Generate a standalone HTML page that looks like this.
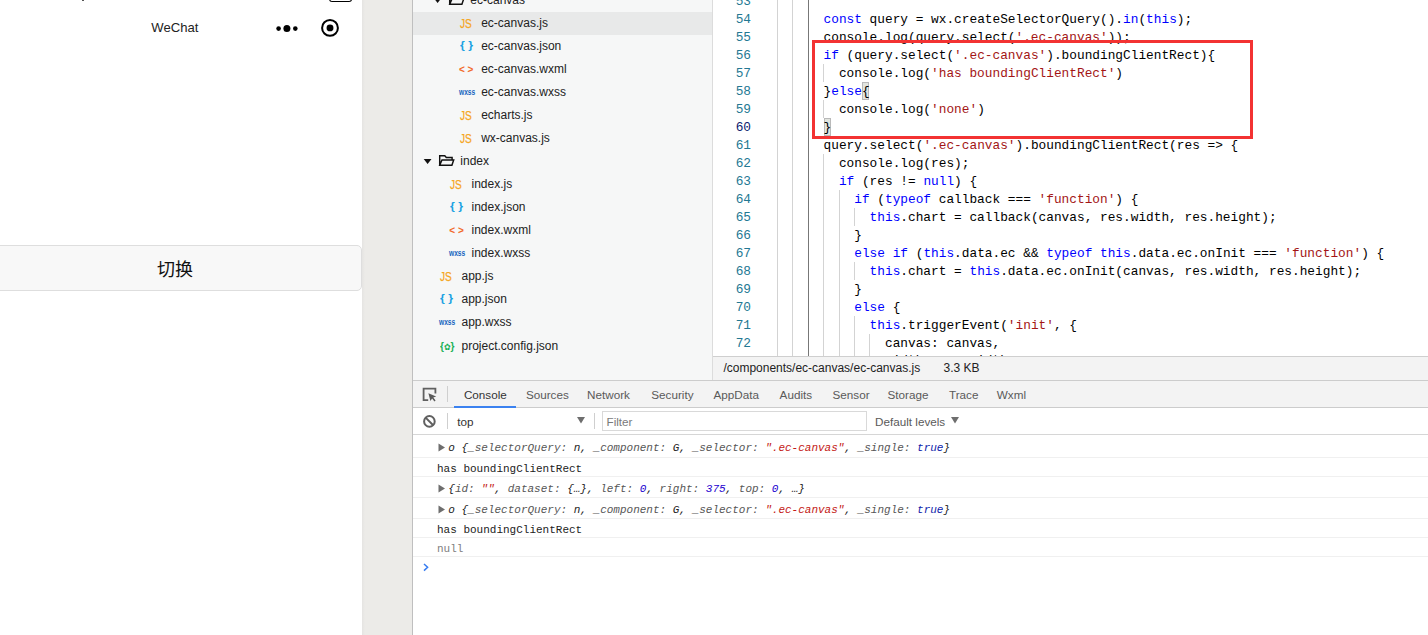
<!DOCTYPE html>
<html lang="zh">
<head>
<meta charset="utf-8">
<title>WeChat DevTools</title>
<style>
*{box-sizing:border-box;margin:0;padding:0}
html,body{width:1428px;height:635px;overflow:hidden;background:#fff}
body{position:relative;font-family:"Liberation Sans","Noto Sans CJK SC",sans-serif;color:#222}
.abs{position:absolute}
#sim{left:0;top:0;width:362px;height:635px;background:#fff;overflow:hidden}
#gap{left:362px;top:0;width:50px;height:635px;background:linear-gradient(90deg,#e5e4e2 0,#ecebe8 3px,#ecebe8 100%)}
#gapline{left:412px;top:0;width:1px;height:635px;background:#bfbfbf}
#navtitle{left:151.3px;top:20px;font-size:13.1px;line-height:16px;color:#222;white-space:nowrap}
#btn{left:-10px;top:245px;width:372px;height:46px;border:1px solid #dedede;border-radius:5px;background:#f8f8f8;font-size:18px;line-height:44px;color:#111}
#btn span{position:absolute;left:166px;top:1.5px}
#tree{left:413px;top:0;width:299px;height:380px;background:#f6f7f7;overflow:hidden}
#treeline{left:712px;top:0;width:1px;height:380px;background:#dcdcdc}
.row{position:absolute;left:0;width:299px;height:23px;font-size:12px;line-height:23px;color:#222;white-space:nowrap}
.row.sel{background:#e8e9e9}
.row .t{position:absolute;top:0}
.row svg{position:absolute}
.ic{position:absolute;top:0;height:23px;line-height:23px;white-space:pre;transform-origin:0 50%}
.js{color:#f5a623;font-size:13.3px;top:0.4px;-webkit-text-stroke:0.25px #f5a623}
.jn{color:#1ba1e2;font-size:11.5px;font-weight:bold;margin-top:-1px}
.xm{color:#f26a2a;font-size:10px;font-weight:bold}
.ws{color:#1565c0;font-size:9.5px;font-weight:bold;margin-top:-1px}
.pj{color:#1bb157;font-size:11.5px;font-weight:bold}
.gr{font-family:"DejaVu Sans",sans-serif;font-size:9px;position:relative;top:-0.5px}
#ed{left:713px;top:0;width:715px;height:356px;background:#fff;overflow:hidden}
.ln{position:absolute;left:0;width:38px;padding-top:1px;text-align:right;color:#237893;font-family:"Liberation Mono",monospace;font-size:12.81px;line-height:18px;height:20px}
.ln.cur{color:#0b216f}
.cl{position:absolute;left:49.1px;padding-top:1px;white-space:pre;color:#000;font-family:"Liberation Mono",monospace;font-size:12.81px;line-height:18px;height:20px}
.k{color:#0000ff}.s{color:#a31515}
.bm{border:1px solid #b9b9b9;background:#e2e5df}
.g{position:absolute;width:1px;background:#d3d3d3}
.g.a{background:#777}
#redbox{left:99px;top:40px;width:441px;height:98.5px;border:3px solid #f33232}
#status{left:713px;top:356px;width:715px;height:25px;background:#f3f3f3;border-top:1px solid #cfcfcf;font-size:12px;line-height:22px;color:#222;white-space:pre}
#status span{position:absolute;top:0}
#tabs{left:413px;top:380px;width:1015px;height:28px;background:#f3f3f3;border-top:1px solid #cccccc;border-bottom:1px solid #cccccc}
.tab{position:absolute;top:0;font-size:11.7px;line-height:27px;color:#5a5a5a;white-space:nowrap}
.tab.on{color:#333}
.vd{position:absolute;width:1px;background:#cfcfcf}
#fbar{left:413px;top:408px;width:1015px;height:27px;background:#fff;border-bottom:1px solid #d6d6d6}
#fbar .tx{position:absolute;top:0;font-size:11.7px;line-height:27px;color:#5a5a5a;white-space:nowrap}
#finput{left:189px;top:3px;width:265px;height:20px;border:1px solid #d9d9d9;background:#fff}
#cons{left:413px;top:435px;width:1015px;height:200px;background:#fff}
.cr{position:absolute;left:0;width:1015px;border-bottom:1px solid #f0f0f0;font-family:"Liberation Mono",monospace;font-size:11px;white-space:pre;color:#222}
.cr .x{position:absolute;left:24px;top:2px}
.cr svg{position:absolute}
.i{font-style:italic}
.n{color:#1c00cf}.b{color:#0d22aa}.r{color:#c41a16}.p{color:#565656}.nl{color:#808080}
</style>
</head>
<body>
<div id="sim" class="abs">
  <svg class="abs" style="left:0;top:0" width="362" height="60" viewBox="0 0 362 60">
    <rect x="329.6" y="-10" width="21.9" height="11.5" rx="2.4" fill="none" stroke="#000" stroke-width="1.2"/>
    <rect x="82" y="0" width="2" height="1" fill="#555"/>
    <circle cx="278.6" cy="28.6" r="2.3" fill="#000"/>
    <circle cx="286.9" cy="28.6" r="3.5" fill="#000"/>
    <circle cx="295.3" cy="28.6" r="2.3" fill="#000"/>
    <circle cx="330" cy="27.9" r="7.9" fill="none" stroke="#000" stroke-width="2"/>
    <circle cx="330" cy="27.9" r="3.45" fill="#000"/>
  </svg>
  <div id="navtitle" class="abs">WeChat</div>
  <div id="btn" class="abs"><span>切换</span></div>
</div>
<div id="gap" class="abs"></div>
<div id="gapline" class="abs"></div>
<div id="tree" class="abs">
<div class="row" style="top:-11px">
<svg style="left:21.4px;top:0;overflow:visible" width="40" height="23" viewBox="0 0 40 23"><path d="M-0.3 8.9 L7.5 8.9 L3.6 14.1 Z" fill="#111"/><path transform="translate(0.6,0)" d="M15.1 15.3 L15.1 5.7 L20.2 5.7 L21.7 7.4 L27.5 7.4 L27.5 9.6 M15.1 15.3 L17.4 9.9 L29.1 9.9 L27.3 15.3 Z" fill="none" stroke="#111" stroke-width="1.45" stroke-linejoin="miter"/></svg>
<span class="t" style="left:57.3px">ec-canvas</span>
</div>
<div class="row sel" style="top:12px">
<span class="ic js" style="left:46.7px;transform:scaleX(0.76)">JS</span>
<span class="t" style="left:68.2px">ec-canvas.js</span>
</div>
<div class="row" style="top:35px">
<span class="ic jn" style="left:46.7px;transform:scaleX(1.07)">{ }</span>
<span class="t" style="left:68.2px">ec-canvas.json</span>
</div>
<div class="row" style="top:58px">
<span class="ic xm" style="left:46.0px;transform:scale(1.0,1.0)">&lt; &gt;</span>
<span class="t" style="left:68.2px">ec-canvas.wxml</span>
</div>
<div class="row" style="top:81px">
<span class="ic ws" style="left:46.1px;transform:scaleX(0.70)">wxss</span>
<span class="t" style="left:68.2px">ec-canvas.wxss</span>
</div>
<div class="row" style="top:104px">
<span class="ic js" style="left:46.7px;transform:scaleX(0.76)">JS</span>
<span class="t" style="left:68.2px">echarts.js</span>
</div>
<div class="row" style="top:127px">
<span class="ic js" style="left:46.7px;transform:scaleX(0.76)">JS</span>
<span class="t" style="left:68.2px">wx-canvas.js</span>
</div>
<div class="row" style="top:150px">
<svg style="left:11.4px;top:0;overflow:visible" width="40" height="23" viewBox="0 0 40 23"><path d="M-0.3 8.9 L7.5 8.9 L3.6 14.1 Z" fill="#111"/><path transform="translate(0.6,0)" d="M15.1 15.3 L15.1 5.7 L20.2 5.7 L21.7 7.4 L27.5 7.4 L27.5 9.6 M15.1 15.3 L17.4 9.9 L29.1 9.9 L27.3 15.3 Z" fill="none" stroke="#111" stroke-width="1.45" stroke-linejoin="miter"/></svg>
<span class="t" style="left:47.3px">index</span>
</div>
<div class="row" style="top:173px">
<span class="ic js" style="left:37.0px;transform:scaleX(0.76)">JS</span>
<span class="t" style="left:58.5px">index.js</span>
</div>
<div class="row" style="top:196px">
<span class="ic jn" style="left:37.0px;transform:scaleX(1.07)">{ }</span>
<span class="t" style="left:58.5px">index.json</span>
</div>
<div class="row" style="top:219px">
<span class="ic xm" style="left:36.3px;transform:scale(1.0,1.0)">&lt; &gt;</span>
<span class="t" style="left:58.5px">index.wxml</span>
</div>
<div class="row" style="top:242px">
<span class="ic ws" style="left:36.4px;transform:scaleX(0.70)">wxss</span>
<span class="t" style="left:58.5px">index.wxss</span>
</div>
<div class="row" style="top:265px">
<span class="ic js" style="left:27.0px;transform:scaleX(0.76)">JS</span>
<span class="t" style="left:48.5px">app.js</span>
</div>
<div class="row" style="top:288px">
<span class="ic jn" style="left:27.0px;transform:scaleX(1.07)">{ }</span>
<span class="t" style="left:48.5px">app.json</span>
</div>
<div class="row" style="top:311px">
<span class="ic ws" style="left:26.4px;transform:scaleX(0.70)">wxss</span>
<span class="t" style="left:48.5px">app.wxss</span>
</div>
<div class="row" style="top:335px">
<span class="ic pj" style="left:27.0px;transform:scaleX(0.88)">{<span class="gr">✿</span>}</span>
<span class="t" style="left:48.5px">project.config.json</span>
</div>
</div>
<div id="treeline" class="abs"></div>
<div id="ed" class="abs">
<div class="g" style="left:64px;top:-9px;height:365px"></div>
<div class="g" style="left:79px;top:-9px;height:365px"></div>
<div class="g a" style="left:95px;top:-9px;height:365px"></div>
<div class="g" style="left:110px;top:64px;height:18px"></div>
<div class="g" style="left:110px;top:100px;height:18px"></div>
<div class="g" style="left:110px;top:154px;height:202px"></div>
<div class="g" style="left:126px;top:190px;height:166px"></div>
<div class="g" style="left:141px;top:208px;height:18px"></div>
<div class="g" style="left:141px;top:262px;height:18px"></div>
<div class="g" style="left:141px;top:316px;height:40px"></div>
<div class="g" style="left:156px;top:334px;height:22px"></div>
<div class="abs bm" style="left:149.0px;top:82px;width:7px;height:18px"></div>
<div class="abs bm" style="left:110.5px;top:118px;width:7px;height:18px"></div>
<div class="ln" style="top:-8px">53</div>
<div class="ln" style="top:10px">54</div>
<div class="cl" style="top:10px">        <span class="k">const</span> query = wx.createSelectorQuery().<span class="k">in</span>(<span class="k">this</span>);</div>
<div class="ln" style="top:28px">55</div>
<div class="cl" style="top:28px">        console.log(query.select(<span class="s">'.ec-canvas'</span>));</div>
<div class="ln" style="top:46px">56</div>
<div class="cl" style="top:46px">        <span class="k">if</span> (query.select(<span class="s">'.ec-canvas'</span>).boundingClientRect){</div>
<div class="ln" style="top:64px">57</div>
<div class="cl" style="top:64px">          console.log(<span class="s">'has boundingClientRect'</span>)</div>
<div class="ln" style="top:82px">58</div>
<div class="cl" style="top:82px">        }<span class="k">else</span>{</div>
<div class="ln" style="top:100px">59</div>
<div class="cl" style="top:100px">          console.log(<span class="s">'none'</span>)</div>
<div class="ln cur" style="top:118px">60</div>
<div class="cl" style="top:118px">        }</div>
<div class="ln" style="top:136px">61</div>
<div class="cl" style="top:136px">        query.select(<span class="s">'.ec-canvas'</span>).boundingClientRect(res =&gt; {</div>
<div class="ln" style="top:154px">62</div>
<div class="cl" style="top:154px">          console.log(res);</div>
<div class="ln" style="top:172px">63</div>
<div class="cl" style="top:172px">          <span class="k">if</span> (res != <span class="k">null</span>) {</div>
<div class="ln" style="top:190px">64</div>
<div class="cl" style="top:190px">            <span class="k">if</span> (<span class="k">typeof</span> callback === <span class="s">'function'</span>) {</div>
<div class="ln" style="top:208px">65</div>
<div class="cl" style="top:208px">              <span class="k">this</span>.chart = callback(canvas, res.width, res.height);</div>
<div class="ln" style="top:226px">66</div>
<div class="cl" style="top:226px">            }</div>
<div class="ln" style="top:244px">67</div>
<div class="cl" style="top:244px">            <span class="k">else</span> <span class="k">if</span> (<span class="k">this</span>.data.ec &amp;&amp; <span class="k">typeof</span> <span class="k">this</span>.data.ec.onInit === <span class="s">'function'</span>) {</div>
<div class="ln" style="top:262px">68</div>
<div class="cl" style="top:262px">              <span class="k">this</span>.chart = <span class="k">this</span>.data.ec.onInit(canvas, res.width, res.height);</div>
<div class="ln" style="top:280px">69</div>
<div class="cl" style="top:280px">            }</div>
<div class="ln" style="top:298px">70</div>
<div class="cl" style="top:298px">            <span class="k">else</span> {</div>
<div class="ln" style="top:316px">71</div>
<div class="cl" style="top:316px">              <span class="k">this</span>.triggerEvent(<span class="s">'init'</span>, {</div>
<div class="ln" style="top:334px">72</div>
<div class="cl" style="top:334px">                canvas: canvas,</div>
<div class="ln" style="top:352px">73</div>
<div class="cl" style="top:351px">                width: res.width,</div>
<div id="redbox" class="abs"></div>
</div>
<div id="status" class="abs"><span style="left:10.4px">/components/ec-canvas/ec-canvas.js</span><span style="left:230.5px">3.3 KB</span></div>
<div id="tabs" class="abs">
<svg class="abs" style="left:9px;top:6px" width="16" height="16" viewBox="0 0 16 16"><path d="M6.2 13.2 L1.6 13.2 L1.6 1.6 L13.4 1.6 L13.4 6.4" fill="none" stroke="#606060" stroke-width="1.8"/><path d="M6.4 6.2 L14.2 9.4 L11.3 10.6 L13.6 13.4 L12.4 14.4 L10.1 11.6 L8.4 14 Z" fill="#5a5a5a"/></svg>
<div class="vd" style="left:34px;top:5px;height:16px"></div>
<div class="tab on" style="left:50.9px">Console</div>
<div class="tab" style="left:112.9px">Sources</div>
<div class="tab" style="left:174.0px">Network</div>
<div class="tab" style="left:238.3px">Security</div>
<div class="tab" style="left:300.5px">AppData</div>
<div class="tab" style="left:366.6px">Audits</div>
<div class="tab" style="left:419.5px">Sensor</div>
<div class="tab" style="left:474.5px">Storage</div>
<div class="tab" style="left:536.0px">Trace</div>
<div class="tab" style="left:583.8px">Wxml</div>
<div class="abs" style="left:41px;top:25px;width:62px;height:2px;background:#3b82f0"></div>
</div>
<div id="fbar" class="abs">
<svg class="abs" style="left:9px;top:6px" width="15" height="15" viewBox="0 0 15 15"><circle cx="7.4" cy="7.4" r="5.3" fill="none" stroke="#606060" stroke-width="2"/><path d="M3.6 3.6 L11.2 11.2" stroke="#606060" stroke-width="2"/></svg>
<div class="vd" style="left:34px;top:5px;height:16px"></div>
<div class="tx" style="left:44.3px;color:#333">top</div>
<svg class="abs" style="left:164px;top:9px" width="9" height="7" viewBox="0 0 9 7"><path d="M0 0 L8 0 L4 6.4 Z" fill="#6e6e6e"/></svg>
<div class="vd" style="left:181px;top:5px;height:16px"></div>
<div id="finput" class="abs"></div>
<div class="tx" style="left:193.5px;color:#7a7a7a">Filter</div>
<div class="tx" style="left:462px">Default levels</div>
<svg class="abs" style="left:538px;top:9px" width="9" height="7" viewBox="0 0 9 7"><path d="M0 0 L8 0 L4 6.4 Z" fill="#6e6e6e"/></svg>
</div>
<div id="cons" class="abs">
<div class="cr" style="top:0px;height:23px;line-height:22px">
<svg style="left:24.5px;top:8px" width="8" height="9" viewBox="0 0 8 9"><path d="M0.5 0.5 L7 4.5 L0.5 8.5 Z" fill="#6e6e6e"/></svg>
<span class="x" style="left:35.3px"><span class="i">o {<span class="p">_selectorQuery: </span>n, <span class="p">_component: </span>G, <span class="p">_selector: </span><span class="r">".ec-canvas"</span>, <span class="p">_single: </span><span class="b">true</span>}</span></span>
</div>
<div class="cr" style="top:23px;height:19px;line-height:18px">
<span class="x">has boundingClientRect</span>
</div>
<div class="cr" style="top:42px;height:21px;line-height:20px">
<svg style="left:24.5px;top:7px" width="8" height="9" viewBox="0 0 8 9"><path d="M0.5 0.5 L7 4.5 L0.5 8.5 Z" fill="#6e6e6e"/></svg>
<span class="x" style="left:35.3px"><span class="i">{<span class="p">id: </span><span class="r">""</span>, <span class="p">dataset: </span>{…}, <span class="p">left: </span><span class="n">0</span>, <span class="p">right: </span><span class="n">375</span>, <span class="p">top: </span><span class="n">0</span>, …}</span></span>
</div>
<div class="cr" style="top:63px;height:21px;line-height:20px">
<svg style="left:24.5px;top:7px" width="8" height="9" viewBox="0 0 8 9"><path d="M0.5 0.5 L7 4.5 L0.5 8.5 Z" fill="#6e6e6e"/></svg>
<span class="x" style="left:35.3px"><span class="i">o {<span class="p">_selectorQuery: </span>n, <span class="p">_component: </span>G, <span class="p">_selector: </span><span class="r">".ec-canvas"</span>, <span class="p">_single: </span><span class="b">true</span>}</span></span>
</div>
<div class="cr" style="top:84px;height:19px;line-height:18px">
<span class="x">has boundingClientRect</span>
</div>
<div class="cr" style="top:103px;height:19px;line-height:18px">
<span class="x"><span class="nl">null</span></span>
</div>
<svg class="abs" style="left:9.6px;top:128.4px" width="7" height="9" viewBox="0 0 7 9"><path d="M1 1 L4.6 4.3 L1 7.6" fill="none" stroke="#367cf1" stroke-width="1.5"/></svg>
</div>
</body>
</html>
